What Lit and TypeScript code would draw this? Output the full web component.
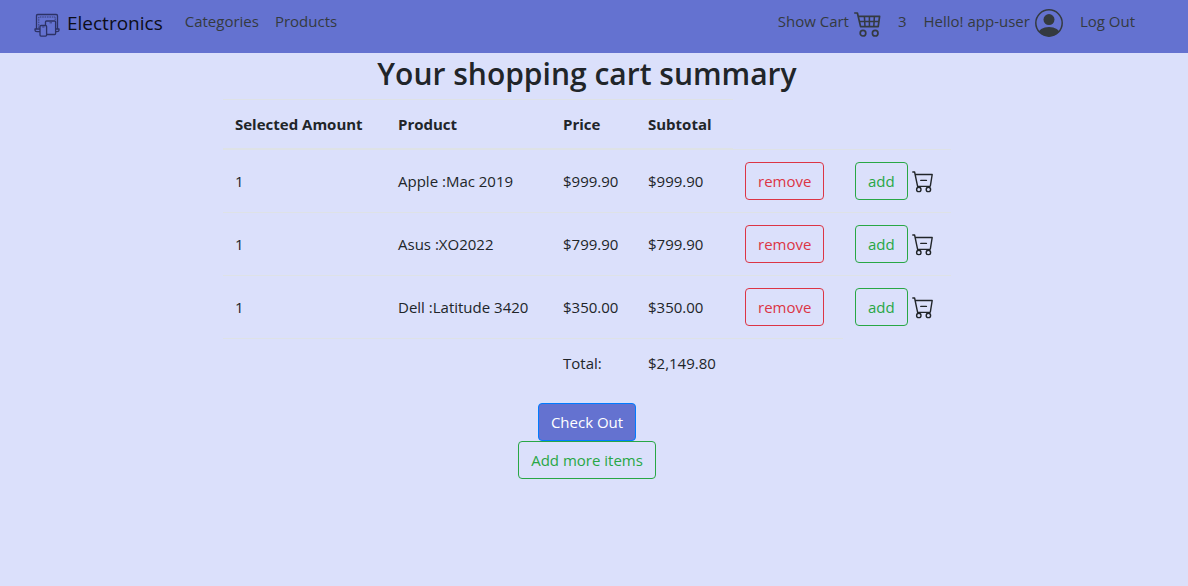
import { LitElement, html, css, svg } from "lit";
import { customElement, state } from "lit/decorators.js";

interface CartLine {
  amount: number;
  product: string;
  price: number;
}

const money = (value: number) =>
  value.toLocaleString("en-US", { style: "currency", currency: "USD" });

const devicesIcon = html`<svg class="icon devices" viewBox="0 0 26 24" width="26" height="24" aria-hidden="true">
  ${svg`<g fill="none" stroke="currentColor" stroke-width="1.3" stroke-linejoin="round">
    <path d="M2.5 16V2.8Q2.5 1.5 3.8 1.5H22.2Q23.5 1.5 23.5 2.8V16"/>
    <path d="M4.8 15V4H21.2V7" stroke-dasharray="1.6 0.8" stroke-width="0.8"/>
    <path d="M6 16H1V17.2Q1 18.6 3 18.6H6M22 16H25V17.2Q25 18.6 23 18.6H22"/>
    <path d="M11.5 12V9Q11.5 8 12.5 8H20.6Q21.6 8 21.6 9V20.5Q21.6 21.5 20.6 21.5H13"/>
    <rect x="6" y="12.5" width="6.6" height="10.6" rx="1"/>
    <path d="M8.2 14H10.4M15.5 9.8H18" stroke-width="0.8"/>
  </g>`}
</svg>`;

const cartIcon = html`<svg class="icon cart" viewBox="0 0 27 25" width="27" height="25" aria-hidden="true">
  ${svg`<g fill="none" stroke="currentColor" stroke-width="1.7" stroke-linejoin="round">
    <path d="M0.2 1H3.4L6.6 14.6H24.2L25.6 4.4H4.2"/>
    <path d="M5.2 9.4H25M10.4 4.4L11 14.6M15.4 4.4V14.6M20.4 4.4L19.8 14.6" stroke-width="1.5"/>
    <circle cx="9" cy="21.2" r="2.8"/><circle cx="21.2" cy="21.2" r="2.8"/>
  </g>`}
</svg>`;

const userIcon = html`<svg class="icon" viewBox="0 0 28 28" width="28" height="28" aria-hidden="true">
  <defs><clipPath id="face"><circle cx="14" cy="14" r="13.2" /></clipPath></defs>
  <circle cx="14" cy="14" r="13.2" fill="none" stroke="currentColor" stroke-width="1.5" />
  <circle cx="14" cy="10.6" r="5.5" fill="currentColor" />
  <ellipse cx="14" cy="25" rx="11" ry="7" fill="currentColor" clip-path="url(#face)" />
</svg>`;

const basketIcon = html`<svg class="icon" viewBox="0 -2 22 24" width="22" height="24" aria-hidden="true">
  <g fill="none" stroke="currentColor" stroke-width="1.4" stroke-linejoin="round" stroke-linecap="round">
    <path d="M0.8 1H2.6L5.6 15.4H18M3.2 3.5H20.2L18.4 14.6" />
    <path d="M8.8 9.4H14.4" />
    <circle cx="6.8" cy="18.4" r="2.2" />
    <circle cx="16.4" cy="18.4" r="2.2" />
  </g>
</svg>`;

@customElement("app-root")
export class AppRoot extends LitElement {
  @state() private lines: CartLine[] = [
    { amount: 1, product: "Apple :Mac 2019", price: 999.9 },
    { amount: 1, product: "Asus :XO2022", price: 799.9 },
    { amount: 1, product: "Dell :Latitude 3420", price: 350 },
  ];

  static styles = css`
    :host {
      display: block;
      min-height: 100vh;
      background: #dbe0fb;
      color: #212529;
      font: 400 15px/24px "Open Sans", "Noto Sans", sans-serif;
    }
    * {
      box-sizing: border-box;
    }
    .icon {
      display: block;
      flex: none;
    }
    .navbar {
      display: flex;
      justify-content: space-between;
      align-items: flex-start;
      min-height: 53px;
      padding: 9px 53px 0 34px;
      background: #6472d0;
    }
    .group {
      display: flex;
      align-items: flex-start;
      gap: 16px;
    }
    .account {
      gap: 17px;
    }
    .navbar a,
    .count {
      display: flex;
      gap: 5px;
      color: #343a40;
      text-decoration: none;
      white-space: nowrap;
    }
    .navbar a.brand {
      gap: 7px;
      margin-right: 6px;
      color: #0c0d18;
      font-size: 19px;
      line-height: 28px;
    }
    .devices {
      margin-top: 4px;
      color: #2c3266;
    }
    .cart {
      margin-top: 3px;
    }
    main {
      display: flex;
      flex-direction: column;
      align-items: center;
      padding-right: 14px;
    }
    h2 {
      margin: 0 0 4px;
      font-size: 30px;
      font-weight: 600;
      line-height: 42px;
    }
    table {
      width: 728px;
      max-width: 100%;
      margin-bottom: 16px;
      table-layout: fixed;
      border-collapse: collapse;
    }
    .c-amount { width: 163px; }
    .c-product { width: 165px; }
    .c-price { width: 85px; }
    .c-subtotal { width: 97px; }
    .c-remove { width: 110px; }
    th,
    td {
      padding: 12px;
      border-top: 1px solid #dee2e6;
      text-align: left;
      vertical-align: middle;
      white-space: nowrap;
    }
    th {
      border-bottom: 2px solid #dee2e6;
      font-weight: 700;
    }
    .add-cell {
      display: flex;
      align-items: center;
      gap: 4px;
    }
    .btn {
      display: block;
      padding: 6px 12px;
      border: 1px solid currentColor;
      border-radius: 4px;
      background: transparent;
      font: inherit;
      cursor: pointer;
    }
    .danger { color: #dc3545; }
    .success { color: #28a745; }
    .primary {
      border-color: #007bff;
      background: #6472d0;
      color: #fff;
    }
  `;

  private change(index: number, by: number) {
    this.lines = this.lines
      .map((line, i) => (i === index ? { ...line, amount: line.amount + by } : line))
      .filter((line) => line.amount > 0);
  }

  render() {
    const count = this.lines.reduce((sum, l) => sum + l.amount, 0);
    const total = this.lines.reduce((sum, l) => sum + l.amount * l.price, 0);
    return html`
      <nav class="navbar">
        <div class="group">
          <a class="brand" href="#">${devicesIcon}Electronics</a>
          <a href="#categories">Categories</a>
          <a href="#products">Products</a>
        </div>
        <div class="group account">
          <a href="#cart">Show Cart${cartIcon}</a>
          <span class="count">${count}</span>
          <a href="#user">Hello! app-user${userIcon}</a>
          <a href="#logout">Log Out</a>
        </div>
      </nav>
      <main>
        <h2>Your shopping cart summary</h2>
        <table>
          <colgroup>
            <col class="c-amount" />
            <col class="c-product" />
            <col class="c-price" />
            <col class="c-subtotal" />
            <col class="c-remove" />
            <col />
          </colgroup>
          <thead>
            <tr>
              <th scope="col">Selected Amount</th>
              <th scope="col">Product</th>
              <th scope="col">Price</th>
              <th scope="col">Subtotal</th>
            </tr>
          </thead>
          <tbody>
            ${this.lines.map(
              (line, i) => html`<tr>
                <td>${line.amount}</td>
                <td>${line.product}</td>
                <td>${money(line.price)}</td>
                <td>${money(line.price * line.amount)}</td>
                <td><button class="btn danger" type="button" @click=${() => this.change(i, -1)}>remove</button></td>
                <td>
                  <div class="add-cell">
                    <button class="btn success" type="button" @click=${() => this.change(i, 1)}>add</button>
                    ${basketIcon}
                  </div>
                </td>
              </tr>`
            )}
            <tr>
              <td></td>
              <td></td>
              <td>Total:</td>
              <td>${money(total)}</td>
              <td></td>
            </tr>
          </tbody>
        </table>
        <button class="btn primary" type="button">Check Out</button>
        <button class="btn success" type="button">Add more items</button>
      </main>
    `;
  }
}
